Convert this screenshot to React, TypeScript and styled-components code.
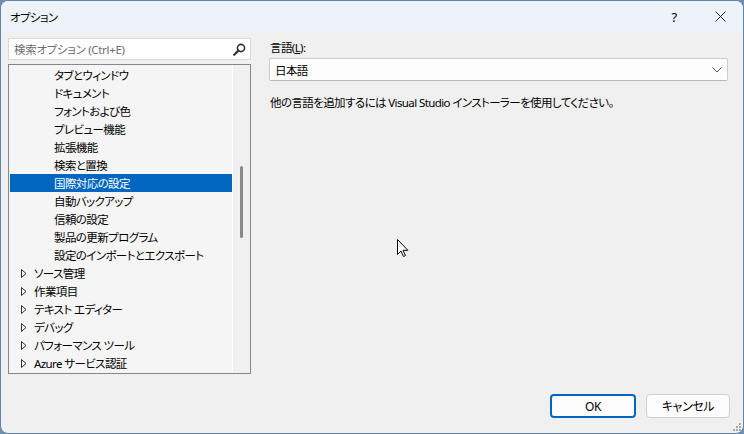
import React from 'react';
import styled, { createGlobalStyle } from 'styled-components';

const GlobalStyle = createGlobalStyle`
  html, body {
    margin: 0;
    padding: 0;
    background: #6f8fb2;
  }
  * {
    box-sizing: border-box;
  }
`;

const Window = styled.div`
  position: relative;
  width: 744px;
  height: 434px;
  background: #f0f0f0;
  border: 1px solid #5f83ad;
  border-radius: 8px;
  overflow: hidden;
  font-family: "Noto Sans", "Noto Sans CJK JP", sans-serif;
  font-size: 11.5px;
  font-feature-settings: "palt";
  letter-spacing: -0.6px;
  color: #000000;
  display: flex;
  flex-direction: column;
`;

const TitleBar = styled.div`
  height: 31px;
  flex: none;
  background: #eef2f9;
  display: flex;
  align-items: center;
  padding-left: 9px;
`;

const Title = styled.div`
  flex: 1;
`;

const TitleButton = styled.div`
  width: 46px;
  height: 31px;
  display: flex;
  align-items: center;
  justify-content: center;
  font-size: 13px;
`;

const Body = styled.div`
  flex: 1;
  display: flex;
  padding: 6px 15px 0 7px;
`;

const LeftColumn = styled.div`
  width: 243px;
  display: flex;
  flex-direction: column;
  gap: 4px;
`;

const SearchBox = styled.div`
  height: 22px;
  background: #ffffff;
  border: 1px solid #d9d9d9;
  display: flex;
  align-items: center;
  padding: 0 4px 0 5px;
`;

const SearchPlaceholder = styled.span`
  flex: 1;
  color: #6d6d6d;
  letter-spacing: -0.3px;
`;

const TreePanel = styled.div`
  height: 310px;
  border: 1px solid #828790;
  background: #f5f5f5;
  display: flex;
`;

const TreeList = styled.div`
  flex: 1;
  padding: 1px 0 0 1px;
  overflow: hidden;
`;

const Row = styled.div<{ $depth: number; $selected?: boolean }>`
  height: 18px;
  display: flex;
  align-items: center;
  padding-left: ${(p) => (p.$depth === 0 ? 11 : 44)}px;
  background: ${(p) => (p.$selected ? '#0067c0' : 'transparent')};
  color: ${(p) => (p.$selected ? '#ffffff' : '#000000')};
  white-space: nowrap;
`;

const Expander = styled.span`
  width: 13px;
  display: inline-flex;
  align-items: center;
`;

const ScrollTrack = styled.div`
  width: 18px;
  border-left: 1px solid #ffffff;
  background: #f0f0f0;
  display: flex;
  justify-content: center;
  padding-top: 101px;
`;

const ScrollThumb = styled.div`
  width: 3px;
  height: 72px;
  border-radius: 2px;
  background: #8a8a8a;
`;

const RightColumn = styled.div`
  flex: 1;
  margin-left: 18px;
  display: flex;
  flex-direction: column;
`;

const FieldLabel = styled.div`
  margin-top: 2px;
  height: 16px;
  line-height: 16px;
  padding-left: 1px;
`;

const Select = styled.div`
  margin-top: 2px;
  height: 23px;
  background: #fdfdfd;
  border: 1px solid #cccccc;
  border-bottom-color: #b8b8b8;
  border-radius: 2px;
  display: flex;
  align-items: center;
  padding: 0 5px 0 5px;
`;

const SelectValue = styled.span`
  flex: 1;
`;

const Hint = styled.div`
  margin-top: 13px;
  padding-left: 1px;
`;

const Footer = styled.div`
  height: 60px;
  flex: none;
  display: flex;
  justify-content: flex-end;
  align-items: flex-start;
  gap: 10px;
  padding: 20px 13px 0 0;
`;

const Button = styled.button<{ $primary?: boolean }>`
  width: ${(p) => (p.$primary ? 86 : 84)}px;
  height: 24px;
  border-radius: 4px;
  background: #fdfdfd;
  border: ${(p) => (p.$primary ? '2px solid #0067c0' : '1px solid #d0d0d0')};
  font-family: inherit;
  font-size: 12px;
  font-feature-settings: "palt";
  letter-spacing: -0.4px;
  color: #000000;
  padding: 0;
`;

const Cursor = styled.svg`
  position: absolute;
  left: 396px;
  top: 238px;
`;

const Grip = styled.svg`
  position: absolute;
  right: 2px;
  bottom: 2px;
`;

type Item = { label: string; depth: number; selected?: boolean };

const items: Item[] = [
  { label: 'タブとウィンドウ', depth: 1 },
  { label: 'ドキュメント', depth: 1 },
  { label: 'フォントおよび色', depth: 1 },
  { label: 'プレビュー機能', depth: 1 },
  { label: '拡張機能', depth: 1 },
  { label: '検索と置換', depth: 1 },
  { label: '国際対応の設定', depth: 1, selected: true },
  { label: '自動バックアップ', depth: 1 },
  { label: '信頼の設定', depth: 1 },
  { label: '製品の更新プログラム', depth: 1 },
  { label: '設定のインポートとエクスポート', depth: 1 },
  { label: 'ソース管理', depth: 0 },
  { label: '作業項目', depth: 0 },
  { label: 'テキスト エディター', depth: 0 },
  { label: 'デバッグ', depth: 0 },
  { label: 'パフォーマンス ツール', depth: 0 },
  { label: 'Azure サービス認証', depth: 0 },
];

const Triangle = () => (
  <svg width="6" height="9" viewBox="0 0 6 9">
    <path d="M0.5 0.5 L5 4.5 L0.5 8.5 Z" fill="none" stroke="#333" strokeWidth="1" />
  </svg>
);

const SearchIcon = () => (
  <svg width="13" height="13" viewBox="0 0 13 13">
    <circle cx="8" cy="5" r="3.6" fill="none" stroke="#333" strokeWidth="1.6" />
    <path d="M5.4 7.6 L1.2 11.8" stroke="#333" strokeWidth="2.2" strokeLinecap="round" />
  </svg>
);

const Chevron = () => (
  <svg width="10" height="6" viewBox="0 0 10 6">
    <path d="M0.5 0.5 L5 5 L9.5 0.5" fill="none" stroke="#555" strokeWidth="1" />
  </svg>
);

const App: React.FC = () => {
  return (
    <>
      <GlobalStyle />
      <Window>
        <TitleBar>
          <Title>オプション</Title>
          <TitleButton>?</TitleButton>
          <TitleButton>
            <svg width="11" height="11" viewBox="0 0 11 11">
              <path d="M0.5 0.5 L10.5 10.5 M10.5 0.5 L0.5 10.5" stroke="#222" strokeWidth="1" />
            </svg>
          </TitleButton>
        </TitleBar>
        <Body>
          <LeftColumn>
            <SearchBox>
              <SearchPlaceholder>検索オプション (Ctrl+E)</SearchPlaceholder>
              <SearchIcon />
            </SearchBox>
            <TreePanel>
              <TreeList>
                {items.map((it) => (
                  <Row key={it.label} $depth={it.depth} $selected={it.selected}>
                    {it.depth === 0 && (
                      <Expander>
                        <Triangle />
                      </Expander>
                    )}
                    {it.label}
                  </Row>
                ))}
              </TreeList>
              <ScrollTrack>
                <ScrollThumb />
              </ScrollTrack>
            </TreePanel>
          </LeftColumn>
          <RightColumn>
            <FieldLabel>
              言語(<u>L</u>):
            </FieldLabel>
            <Select>
              <SelectValue>日本語</SelectValue>
              <Chevron />
            </Select>
            <Hint>他の言語を追加するには Visual Studio インストーラーを使用してください。</Hint>
          </RightColumn>
        </Body>
        <Footer>
          <Button $primary>OK</Button>
          <Button>キャンセル</Button>
        </Footer>
        <Cursor width="12" height="19" viewBox="0 0 12 19">
          <path
            d="M0.5 0.5 L0.5 15.5 L4 12 L6.5 17.5 L8.5 16.5 L6 11.3 L10.8 11.3 Z"
            fill="#ffffff"
            stroke="#000000"
            strokeWidth="1"
            strokeLinejoin="round"
          />
        </Cursor>
        <Grip width="9" height="9" viewBox="0 0 9 9">
          <g fill="#a8a8a8">
            <rect x="7" y="1" width="2" height="2" />
            <rect x="4" y="4" width="2" height="2" />
            <rect x="7" y="4" width="2" height="2" />
            <rect x="1" y="7" width="2" height="2" />
            <rect x="4" y="7" width="2" height="2" />
            <rect x="7" y="7" width="2" height="2" />
          </g>
        </Grip>
      </Window>
    </>
  );
};

export default App;
